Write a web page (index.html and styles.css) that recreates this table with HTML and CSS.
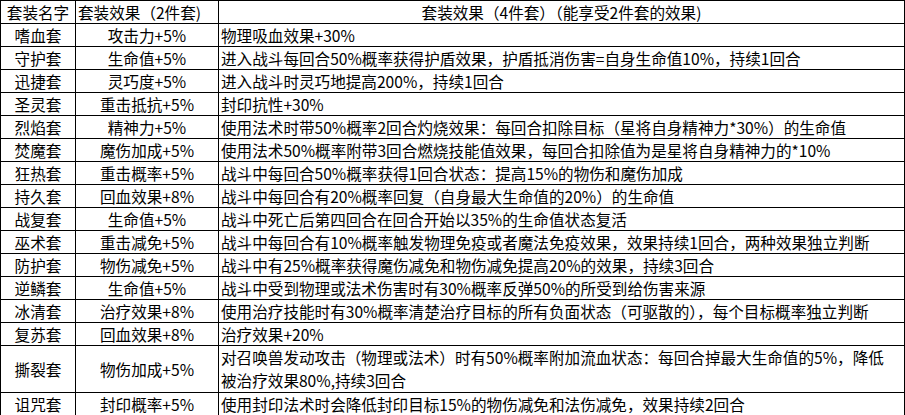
FILE: index.html
```html
<!DOCTYPE html>
<html lang="zh-CN">
<head>
<meta charset="utf-8">
<title>套装效果</title>
<link rel="stylesheet" href="styles.css">
</head>
<body>
<table class="sets">
  <colgroup>
    <col class="c-name">
    <col class="c-two">
    <col class="c-four">
  </colgroup>
  <thead>
    <tr>
      <th class="h-name">套装名字</th>
      <th class="h-two">套装效果（2件套)</th>
      <th class="h-four">套装效果（4件套）（能享受2件套的效果)</th>
    </tr>
  </thead>
  <tbody>
    <tr><td class="name">嗜血套</td><td class="two">攻击力+5%</td><td class="four">物理吸血效果+30%</td></tr>
    <tr><td class="name">守护套</td><td class="two">生命值+5%</td><td class="four">进入战斗每回合50%概率获得护盾效果，护盾抵消伤害=自身生命值10%，持续1回合</td></tr>
    <tr><td class="name">迅捷套</td><td class="two">灵巧度+5%</td><td class="four">进入战斗时灵巧地提高200%，持续1回合</td></tr>
    <tr><td class="name">圣灵套</td><td class="two">重击抵抗+5%</td><td class="four">封印抗性+30%</td></tr>
    <tr><td class="name">烈焰套</td><td class="two">精神力+5%</td><td class="four">使用法术时带50%概率2回合灼烧效果：每回合扣除目标（星将自身精神力*30%）的生命值</td></tr>
    <tr><td class="name">焚魔套</td><td class="two">魔伤加成+5%</td><td class="four">使用法术50%概率附带3回合燃烧技能值效果，每回合扣除值为是星将自身精神力的*10%</td></tr>
    <tr><td class="name">狂热套</td><td class="two">重击概率+5%</td><td class="four">战斗中每回合50%概率获得1回合状态：提高15%的物伤和魔伤加成</td></tr>
    <tr><td class="name">持久套</td><td class="two">回血效果+8%</td><td class="four">战斗中每回合有20%概率回复（自身最大生命值的20%）的生命值</td></tr>
    <tr><td class="name">战复套</td><td class="two">生命值+5%</td><td class="four">战斗中死亡后第四回合在回合开始以35%的生命值状态复活</td></tr>
    <tr><td class="name">巫术套</td><td class="two">重击减免+5%</td><td class="four">战斗中每回合有10%概率触发物理免疫或者魔法免疫效果，效果持续1回合，两种效果独立判断</td></tr>
    <tr><td class="name">防护套</td><td class="two">物伤减免+5%</td><td class="four">战斗中有25%概率获得魔伤减免和物伤减免提高20%的效果，持续3回合</td></tr>
    <tr><td class="name">逆鳞套</td><td class="two">生命值+5%</td><td class="four">战斗中受到物理或法术伤害时有30%概率反弹50%的所受到给伤害来源</td></tr>
    <tr><td class="name">冰清套</td><td class="two">治疗效果+8%</td><td class="four">使用治疗技能时有30%概率清楚治疗目标的所有负面状态（可驱散的），每个目标概率独立判断</td></tr>
    <tr><td class="name">复苏套</td><td class="two">回血效果+8%</td><td class="four">治疗效果+20%</td></tr>
    <tr class="tall"><td class="name">撕裂套</td><td class="two">物伤加成+5%</td><td class="four">对召唤兽发动攻击（物理或法术）时有50%概率附加流血状态：每回合掉最大生命值的5%，降低<br>被治疗效果80%,持续3回合</td></tr>
    <tr><td class="name">诅咒套</td><td class="two">封印概率+5%</td><td class="four">使用封印法术时会降低封印目标15%的物伤减免和法伤减免，效果持续2回合</td></tr>
  </tbody>
</table>
</body>
</html>
```

FILE: styles.css
```css
html, body {
  margin: 0;
  padding: 0;
  background: #ffffff;
}

body {
  font-family: "Microsoft YaHei", "Noto Sans CJK SC", "Noto Sans", sans-serif;
  font-size: 15.6px;
  color: #000000;
}

.sets {
  border-collapse: collapse;
  table-layout: fixed;
  width: 904px;
}

.c-name { width: 75px; }
.c-two { width: 143px; }
.c-four { width: 686px; }

.sets th,
.sets td {
  border: 1px solid #000000;
  padding: 0 2px;
  height: 22px;
  line-height: 22px;
  font-weight: normal;
  white-space: nowrap;
  overflow: hidden;
  vertical-align: middle;
}

.h-name { text-align: center; padding: 0; }
.h-two { text-align: left; }
.h-four { text-align: center; }

.name { text-align: center; }
.two { text-align: center; }
.four { text-align: left; }

.tall .four {
  line-height: 23px;
  height: 45px;
}
```
